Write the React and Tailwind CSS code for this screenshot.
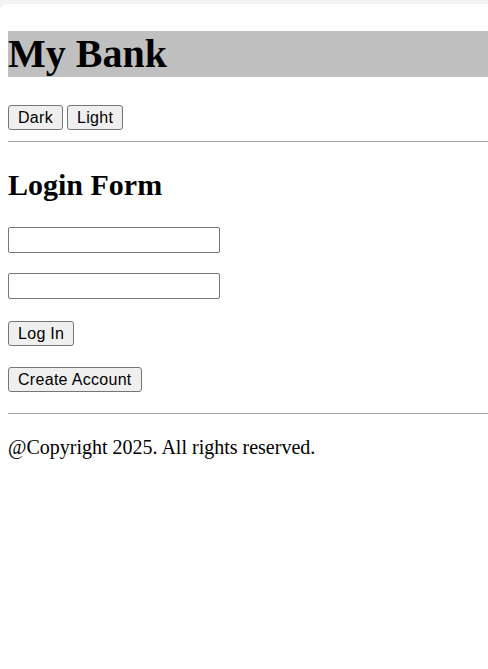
export default function App() {
  return (
    <div className="min-h-screen bg-[#f3f3f3] pt-[4px]">
      <div className="min-h-[665px] rounded-tl-[8px] bg-white pl-2 font-['Liberation_Serif',serif] text-black">
        <h1 className="pt-[27px]">
          <span className="block h-[46px] bg-[#c0c0c0] text-[40px] font-bold leading-[46px]">My Bank</span>
        </h1>

        <div className="mt-[28px] flex gap-[4px]">
          <Btn>Dark</Btn>
          <Btn>Light</Btn>
        </div>

        <hr className="mt-[11px] border-t border-[#a0a0a0]" />

        <h2 className="mt-[26px] text-[30px] font-bold leading-[34px]">Login Form</h2>

        <form className="mt-[25px] flex flex-col items-start">
          <input type="text" className="h-[26px] w-[212px] rounded-[2px] border border-[#767676] bg-white px-1 font-['Liberation_Sans',sans-serif] text-[13px]" />
          <input type="password" className="mt-[20px] h-[26px] w-[212px] rounded-[2px] border border-[#767676] bg-white px-1 font-['Liberation_Sans',sans-serif] text-[13px]" />
          <div className="mt-[22px]">
            <Btn>Log In</Btn>
          </div>
          <div className="mt-[21px]">
            <Btn>Create Account</Btn>
          </div>
        </form>

        <hr className="mt-[21px] border-t border-[#a0a0a0]" />

        <p className="mt-[22px] text-[20px] leading-[23px]">@Copyright 2025. All rights reserved.</p>
      </div>
    </div>
  )
}

function Btn({ children }) {
  return (
    <button
      type="button"
      className="h-[25px] rounded-[3px] border border-[#767676] bg-[#efefef] px-[9px] font-['Liberation_Sans',sans-serif] text-[16px] leading-[21px] tracking-[0.3px] text-black"
    >
      {children}
    </button>
  )
}
